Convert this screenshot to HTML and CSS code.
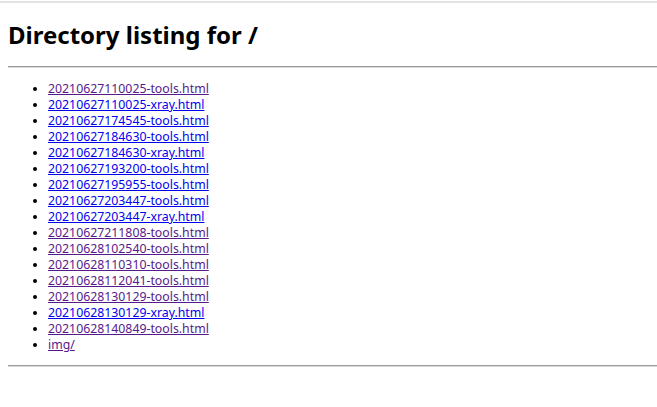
FILE: index.html
```html
<!DOCTYPE html>
<html>
<head>
<meta charset="utf-8">
<title>Directory listing for /</title>
<link rel="stylesheet" href="styles.css">
</head>
<body>
<div class="topline"></div>
<div class="page">
<h1 class="title">Directory listing for /</h1>
<hr class="rule">
<ul class="listing">
<li><a class="visited" href="20210627110025-tools.html">20210627110025-tools.html</a></li>
<li><a href="20210627110025-xray.html">20210627110025-xray.html</a></li>
<li><a href="20210627174545-tools.html">20210627174545-tools.html</a></li>
<li><a href="20210627184630-tools.html">20210627184630-tools.html</a></li>
<li><a href="20210627184630-xray.html">20210627184630-xray.html</a></li>
<li><a href="20210627193200-tools.html">20210627193200-tools.html</a></li>
<li><a href="20210627195955-tools.html">20210627195955-tools.html</a></li>
<li><a href="20210627203447-tools.html">20210627203447-tools.html</a></li>
<li><a href="20210627203447-xray.html">20210627203447-xray.html</a></li>
<li><a class="visited" href="20210627211808-tools.html">20210627211808-tools.html</a></li>
<li><a class="visited" href="20210628102540-tools.html">20210628102540-tools.html</a></li>
<li><a class="visited" href="20210628110310-tools.html">20210628110310-tools.html</a></li>
<li><a class="visited" href="20210628112041-tools.html">20210628112041-tools.html</a></li>
<li><a class="visited" href="20210628130129-tools.html">20210628130129-tools.html</a></li>
<li><a href="20210628130129-xray.html">20210628130129-xray.html</a></li>
<li><a class="visited" href="20210628140849-tools.html">20210628140849-tools.html</a></li>
<li><a class="visited" href="img/">img/</a></li>
</ul>
<hr class="rule">
</div>
</body>
</html>
```

FILE: styles.css
```css
html, body {
  margin: 0;
  padding: 0;
  background: #ffffff;
}
body {
  font-family: "Noto Sans", "Open Sans", sans-serif;
  color: #000000;
}
.topline {
  margin-top: 1px;
  height: 2px;
  background: #e3e3e3;
}
.page {
  padding-left: 8px;
}
.title {
  margin: 0;
  padding-top: 15px;
  height: 40px;
  font-size: 24px;
  line-height: 34px;
  font-weight: bold;
}
.rule {
  margin: 8px 0 0 0;
  border: 0;
  border-top: 1px solid #9b9b9b;
  border-bottom: 1px solid #d8d8d8;
  height: 0;
}
.listing {
  margin: 13px 0 12px 0;
  padding-left: 40px;
  font-size: 12.3px;
  line-height: 16px;
}
.listing a {
  color: #0000ee;
}
.listing a.visited {
  color: #551a8b;
}
```
